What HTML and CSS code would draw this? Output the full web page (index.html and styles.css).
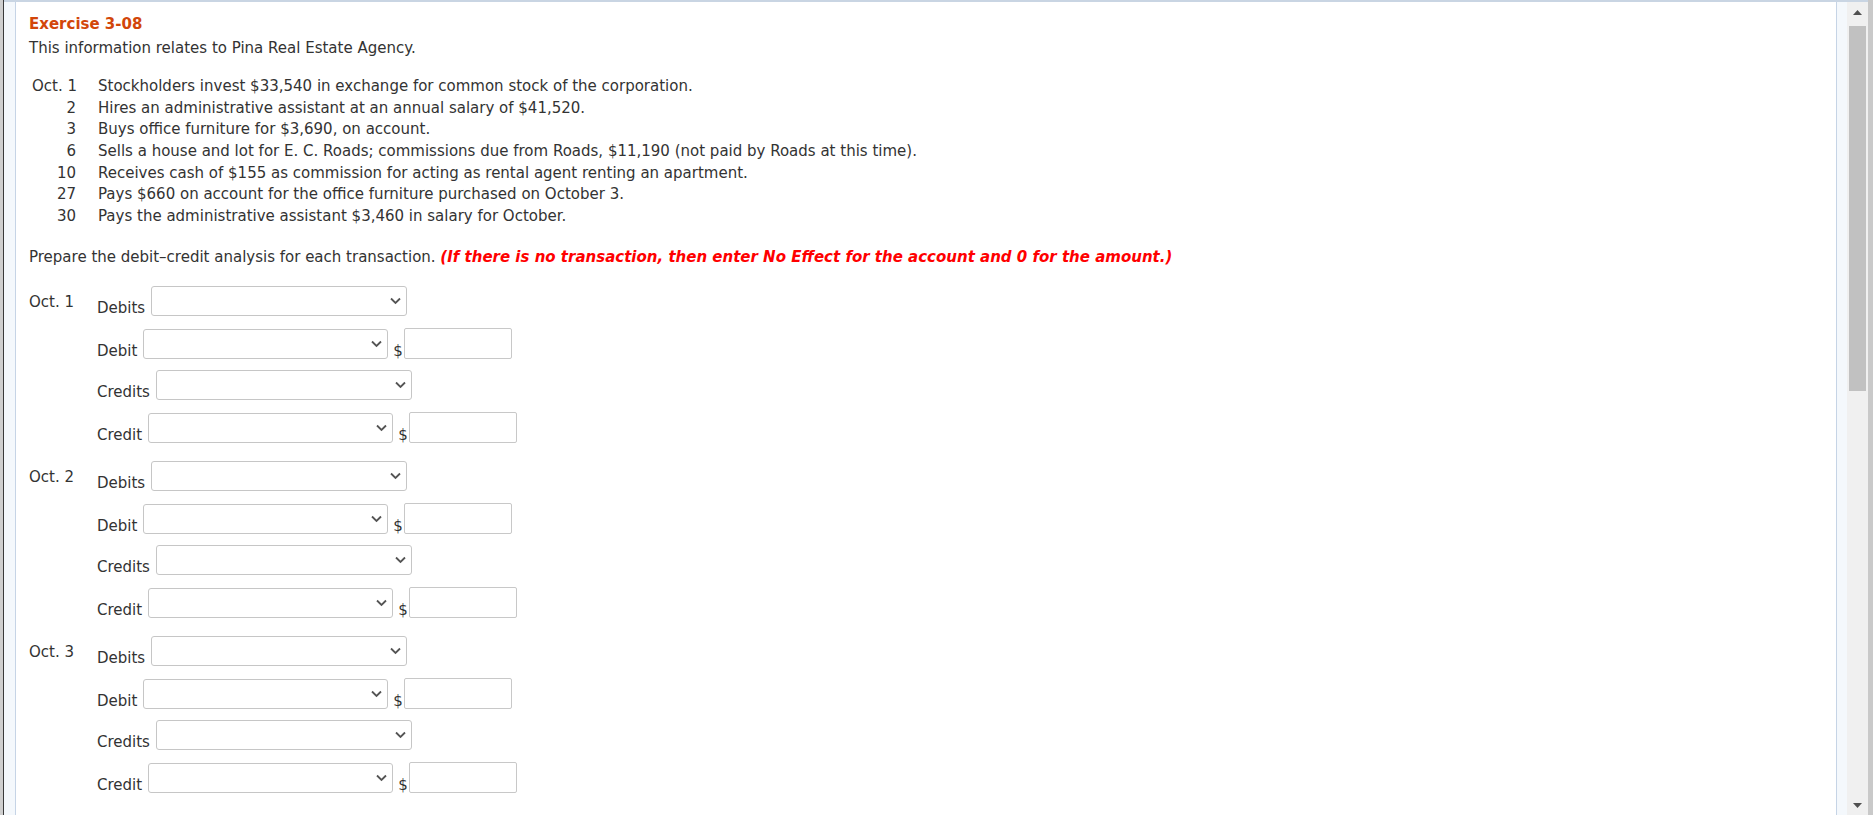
FILE: index.html
```html
<!DOCTYPE html>
<html lang="en">
<head>
<meta charset="utf-8">
<title>Exercise 3-08</title>
<link rel="stylesheet" href="styles.css">
</head>
<body>
<div class="edge-left"></div>
<div class="frame">
  <div class="gutter gutter-left"></div>
  <main class="content">
    <h1 class="title">Exercise 3-08</h1>
    <p class="intro">This information relates to Pina Real Estate Agency.</p>
    <div class="events">
      <span class="ev-date">Oct. 1</span><span class="ev-desc">Stockholders invest $33,540 in exchange for common stock of the corporation.</span>
      <span class="ev-date">2</span><span class="ev-desc">Hires an administrative assistant at an annual salary of $41,520.</span>
      <span class="ev-date">3</span><span class="ev-desc">Buys office furniture for $3,690, on account.</span>
      <span class="ev-date">6</span><span class="ev-desc">Sells a house and lot for E. C. Roads; commissions due from Roads, $11,190 (not paid by Roads at this time).</span>
      <span class="ev-date">10</span><span class="ev-desc">Receives cash of $155 as commission for acting as rental agent renting an apartment.</span>
      <span class="ev-date">27</span><span class="ev-desc">Pays $660 on account for the office furniture purchased on October 3.</span>
      <span class="ev-date">30</span><span class="ev-desc">Pays the administrative assistant $3,460 in salary for October.</span>
    </div>
    <p class="instructions">Prepare the debit–credit analysis for each transaction. <em class="note">(If there is no transaction, then enter No Effect for the account and 0 for the amount.)</em></p>

    <section class="entry">
      <div class="entry-date">Oct. 1</div>
      <div class="entry-rows">
        <div class="row"><span class="label">Debits</span><span class="select-wrap"><select class="dropdown wide"><option></option></select><svg class="chev" width="11" height="7" viewBox="0 0 11 7"><path d="M1 1 L5.5 5.5 L10 1" /></svg></span></div>
        <div class="row"><span class="label">Debit</span><span class="select-wrap"><select class="dropdown narrow"><option></option></select><svg class="chev" width="11" height="7" viewBox="0 0 11 7"><path d="M1 1 L5.5 5.5 L10 1" /></svg></span><span class="dollar">$</span><input class="amount" type="text"></div>
        <div class="row"><span class="label">Credits</span><span class="select-wrap"><select class="dropdown wide"><option></option></select><svg class="chev" width="11" height="7" viewBox="0 0 11 7"><path d="M1 1 L5.5 5.5 L10 1" /></svg></span></div>
        <div class="row"><span class="label">Credit</span><span class="select-wrap"><select class="dropdown narrow"><option></option></select><svg class="chev" width="11" height="7" viewBox="0 0 11 7"><path d="M1 1 L5.5 5.5 L10 1" /></svg></span><span class="dollar">$</span><input class="amount" type="text"></div>
      </div>
    </section>

    <section class="entry">
      <div class="entry-date">Oct. 2</div>
      <div class="entry-rows">
        <div class="row"><span class="label">Debits</span><span class="select-wrap"><select class="dropdown wide"><option></option></select><svg class="chev" width="11" height="7" viewBox="0 0 11 7"><path d="M1 1 L5.5 5.5 L10 1" /></svg></span></div>
        <div class="row"><span class="label">Debit</span><span class="select-wrap"><select class="dropdown narrow"><option></option></select><svg class="chev" width="11" height="7" viewBox="0 0 11 7"><path d="M1 1 L5.5 5.5 L10 1" /></svg></span><span class="dollar">$</span><input class="amount" type="text"></div>
        <div class="row"><span class="label">Credits</span><span class="select-wrap"><select class="dropdown wide"><option></option></select><svg class="chev" width="11" height="7" viewBox="0 0 11 7"><path d="M1 1 L5.5 5.5 L10 1" /></svg></span></div>
        <div class="row"><span class="label">Credit</span><span class="select-wrap"><select class="dropdown narrow"><option></option></select><svg class="chev" width="11" height="7" viewBox="0 0 11 7"><path d="M1 1 L5.5 5.5 L10 1" /></svg></span><span class="dollar">$</span><input class="amount" type="text"></div>
      </div>
    </section>

    <section class="entry">
      <div class="entry-date">Oct. 3</div>
      <div class="entry-rows">
        <div class="row"><span class="label">Debits</span><span class="select-wrap"><select class="dropdown wide"><option></option></select><svg class="chev" width="11" height="7" viewBox="0 0 11 7"><path d="M1 1 L5.5 5.5 L10 1" /></svg></span></div>
        <div class="row"><span class="label">Debit</span><span class="select-wrap"><select class="dropdown narrow"><option></option></select><svg class="chev" width="11" height="7" viewBox="0 0 11 7"><path d="M1 1 L5.5 5.5 L10 1" /></svg></span><span class="dollar">$</span><input class="amount" type="text"></div>
        <div class="row"><span class="label">Credits</span><span class="select-wrap"><select class="dropdown wide"><option></option></select><svg class="chev" width="11" height="7" viewBox="0 0 11 7"><path d="M1 1 L5.5 5.5 L10 1" /></svg></span></div>
        <div class="row"><span class="label">Credit</span><span class="select-wrap"><select class="dropdown narrow"><option></option></select><svg class="chev" width="11" height="7" viewBox="0 0 11 7"><path d="M1 1 L5.5 5.5 L10 1" /></svg></span><span class="dollar">$</span><input class="amount" type="text"></div>
      </div>
    </section>
  </main>
  <div class="gutter gutter-right"></div>
  <div class="scrollbar">
    <div class="sb-btn sb-up"><svg width="9" height="5" viewBox="0 0 9 5"><polygon points="4.5,0 9,5 0,5" /></svg></div>
    <div class="sb-thumb"></div>
    <div class="sb-track"></div>
    <div class="sb-btn sb-down"><svg width="9" height="5" viewBox="0 0 9 5"><polygon points="0,0 9,0 4.5,5" /></svg></div>
  </div>
</div>
<div class="edge-right"></div>
</body>
</html>
```

FILE: styles.css
```css
* { box-sizing: border-box; }

html, body {
  margin: 0;
  padding: 0;
}

body {
  display: flex;
  height: 815px;
  overflow: hidden;
  background: #ffffff;
  font-family: "DejaVu Sans", Verdana, sans-serif;
  font-size: 15px;
  color: #333333;
}

.edge-left {
  width: 4px;
  flex: none;
  background: #cfcfcf;
  border-right: 1px solid #3a3a3a;
}

.edge-right {
  width: 5px;
  flex: none;
  background: #c9c9c9;
}

.frame {
  flex: 1;
  min-width: 0;
  display: flex;
  border-top: 2px solid #c9d5e3;
}

.gutter {
  flex: none;
  background: #f4f8fc;
}

.gutter-left {
  width: 12px;
  border-right: 1px solid #c6d4e6;
}

.gutter-right {
  width: 11px;
  border-left: 1px solid #c6d4e6;
}

.content {
  flex: 1;
  min-width: 0;
  overflow: hidden;
  background: #ffffff;
  padding: 12px 0 0 13px;
}

.title {
  margin: 0;
  font-size: 15px;
  font-weight: bold;
  line-height: 20px;
  color: #d2460a;
}

.intro {
  margin: 4px 0 0;
  line-height: 20px;
}

.events {
  display: grid;
  grid-template-columns: 44px auto;
  justify-content: start;
  column-gap: 22px;
  margin: 18px 0 0 3px;
  line-height: 21.67px;
  white-space: nowrap;
}

.ev-date {
  text-align: right;
}

.instructions {
  margin: 19px 0 0;
  line-height: 20px;
}

.note {
  font-style: italic;
  font-weight: bold;
  color: #ff0000;
}

.entry {
  display: flex;
  margin-top: 19px;
}

.entry + .entry {
  margin-top: 18px;
}

.entry-date {
  width: 68px;
  flex: none;
  padding-top: 6px;
  line-height: 20px;
}

.entry-rows {
  display: flex;
  flex-direction: column;
}

.row {
  display: flex;
  align-items: flex-end;
}

.row + .row {
  margin-top: 12px;
}

.row:nth-child(3) {
  margin-top: 11px;
}

.label {
  line-height: 16px;
  margin-right: 6px;
}

.select-wrap {
  position: relative;
  display: flex;
}

.dropdown {
  -webkit-appearance: none;
  appearance: none;
  height: 30px;
  margin: 0;
  border: 1px solid #c6c6c6;
  border-radius: 3px;
  background: #ffffff;
  font: inherit;
  outline: none;
}

.dropdown.wide { width: 256px; }
.dropdown.narrow { width: 245px; }

.chev {
  position: absolute;
  right: 6px;
  top: 50%;
  transform: translateY(-50%);
  pointer-events: none;
}

.chev path {
  fill: none;
  stroke: #555555;
  stroke-width: 1.8;
}

.dollar {
  line-height: 16px;
  margin: 0 1px 0 5px;
}

.amount {
  width: 108px;
  height: 31px;
  margin: 0;
  padding: 0 4px;
  border: 1px solid #c8c8c8;
  border-radius: 2px;
  font: inherit;
  outline: none;
}

.scrollbar {
  width: 21px;
  flex: none;
  display: flex;
  flex-direction: column;
  background: #f0f0f0;
}

.sb-btn {
  height: 24px;
  flex: none;
  display: flex;
  align-items: center;
  justify-content: center;
}

.sb-btn svg polygon { fill: #505050; }

.sb-up { padding-bottom: 4px; }
.sb-down { padding-top: 4px; }

.sb-thumb {
  height: 365px;
  flex: none;
  margin: 0 2px;
  background: #c1c1c1;
}

.sb-track { flex: 1; }
```
